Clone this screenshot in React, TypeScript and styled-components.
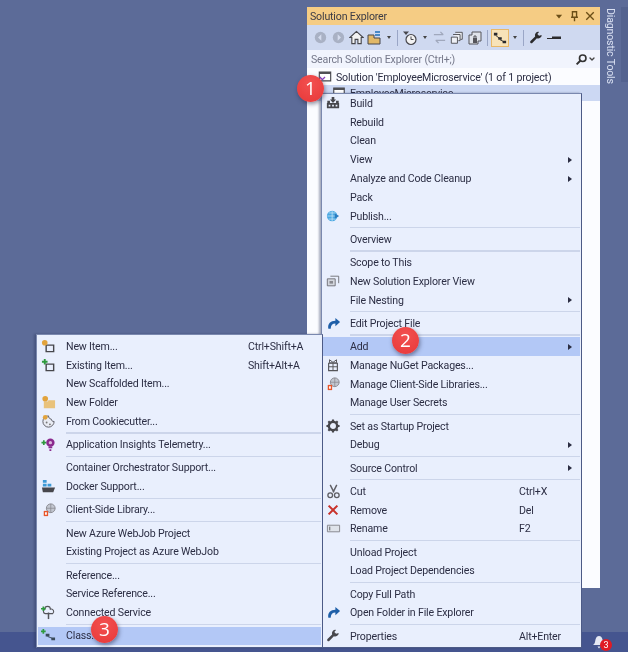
import React from "react";
import styled, { createGlobalStyle } from "styled-components";
import { ChevronDown } from "lucide-react";

const Global = createGlobalStyle`
  html, body { margin: 0; padding: 0; background: #5c6b98; }
  * { box-sizing: border-box; }
`;

const Page = styled.div`
  position: relative;
  width: 628px;
  height: 652px;
  overflow: hidden;
  display: flex;
  flex-direction: column;
  background: #5c6b98;
  font-family: Roboto, "Noto Sans", sans-serif;
  font-size: 10.6px;
  letter-spacing: -0.17px;
  color: #2c2e44;
  filter: blur(0.35px);
`;
const Workspace = styled.div`
  flex: 1;
  display: flex;
  justify-content: flex-end;
  padding: 7px 0 44px 0;
`;
const Panel = styled.section`
  width: 293px;
  display: flex;
  flex-direction: column;
  background: #fcfdff;
`;
const TitleBar = styled.header`
  height: 18px;
  flex: none;
  display: flex;
  align-items: center;
  padding: 0 5px 0 3px;
  background: #f5cc84;
  color: #3b3b45;
`;
const TitleText = styled.span`
  flex: 1;
`;
const TitleIcons = styled.span`
  display: flex;
  align-items: center;
  gap: 5px;
`;
const Toolbar = styled.div`
  height: 25px;
  flex: none;
  display: flex;
  align-items: center;
  padding-left: 4px;
  background: #cfd9f0;
`;
const SearchBox = styled.div`
  height: 18px;
  flex: none;
  display: flex;
  align-items: center;
  justify-content: space-between;
  padding: 0 4px 0 4px;
  background: #f1f4fd;
  color: #75788a;
`;
const SearchIcons = styled.span`
  display: flex;
  align-items: center;
`;
const Tree = styled.div`
  flex: 1;
  padding-top: 1px;
  background: #fbfcff;
`;
const TreeRow = styled.div<{ $selected?: boolean; $indent: number }>`
  height: 16px;
  display: flex;
  align-items: center;
  gap: 4px;
  padding-left: ${(p) => p.$indent}px;
  background: ${(p) => (p.$selected ? "#ccd8f3" : "transparent")};
  white-space: nowrap;
`;
const Rail = styled.aside`
  width: 28px;
  flex: none;
  display: flex;
  padding-left: 4px;
  justify-content: space-between;
`;
const RailLabel = styled.span`
  writing-mode: vertical-rl;
  color: #d9e0f2;
  height: 80px;
  white-space: nowrap;
  padding-top: 1px;
`;
const RailStrip = styled.span`
  width: 7px;
  height: 75px;
  background: #53628f;
`;
const StatusBar = styled.footer`
  height: 20px;
  flex: none;
  display: flex;
  justify-content: flex-end;
  align-items: center;
  padding-right: 21px;
  background: #45558f;
`;
const BellWrap = styled.span`
  position: relative;
  display: block;
  width: 16px;
  height: 16px;
`;
const BellCount = styled.span`
  position: absolute;
  left: 9px;
  top: 5px;
  width: 12px;
  height: 12px;
  border-radius: 50%;
  background: #e01b24;
  color: #fff;
  font-size: 9px;
  line-height: 12px;
  text-align: center;
`;

const Menu = styled.nav<{ $left: number; $top: number; $width: number; $padTop: number }>`
  position: absolute;
  left: ${(p) => p.$left}px;
  top: ${(p) => p.$top}px;
  width: ${(p) => p.$width}px;
  padding: ${(p) => p.$padTop}px 1px 2px;
  background: #e9effd;
  border: 1px solid #7a88ae;
  border-right-color: #4c5a86;
  border-bottom-color: #4c5a86;
  box-shadow: -2px 0 2px rgba(40, 50, 90, 0.4);
`;
const Row = styled.div<{ $active?: boolean; $gutter: number; $keyCol: number }>`
  height: 18.8px;
  display: grid;
  grid-template-columns: ${(p) => p.$gutter}px 1fr ${(p) => p.$keyCol}px 12px;
  align-items: center;
  white-space: nowrap;
  background: ${(p) => (p.$active ? "#b3c8f6" : "transparent")};
`;
const IconCell = styled.span`
  display: flex;
  justify-content: center;
  align-items: center;
  padding-right: 7px;
`;
const Caret = styled.span`
  width: 0;
  height: 0;
  border-left: 4px solid #2b2d42;
  border-top: 3.5px solid transparent;
  border-bottom: 3.5px solid transparent;
`;
const Separator = styled.div<{ $gutter: number }>`
  height: 4.4px;
  margin-left: ${(p) => p.$gutter}px;
  display: flex;
  align-items: center;
  &::after {
    content: "";
    flex: 1;
    height: 1.4px;
    background: #ccd5ea;
  }
`;
const Callout = styled.span<{ $left: number; $top: number }>`
  position: absolute;
  left: ${(p) => p.$left}px;
  top: ${(p) => p.$top}px;
  width: 27px;
  height: 27px;
  border-radius: 50%;
  background: radial-gradient(circle at 50% 30%, #f25050, #e83838);
  color: #fff;
  font-family: "Open Sans", sans-serif;
  font-size: 19px;
  letter-spacing: 0;
  line-height: 27px;
  text-align: center;
  box-shadow: 1px 2px 4px rgba(30, 30, 60, 0.5);
`;

const S = ({ children, w = 16, h = 16 }: { children: React.ReactNode; w?: number; h?: number }) => (
  <svg width={w} height={h} viewBox="0 0 16 16" style={{ flex: "none", display: "block" }}>
    {children}
  </svg>
);

const Dk = "#47474c";
const Icons: Record<string, React.ReactNode> = {
  build: <S w={14} h={14}><path d="M1 8h14v6H1z" fill={Dk} /><path d="M1.500 5.500h3v3h-3zM11.500 5.500h3v3h-3z" fill={Dk} /><path d="M3 10h2v2H3zM7 10h2v2H7zM11 10h2v2h-2z" fill="#e9effd" /><path d="M6.500 1h3v3h2l-3.500 4-3.500-4h2z" fill={Dk} /></S>,
  publish: <S w={14} h={14}><circle cx="7" cy="8" r="6" fill="#4aa8e2" /><path d="M1.500 8h11M7 2v12M3 4.500h8M3 11.500h8" stroke="#cfe8f8" strokeWidth=".8" /><path d="M10 5l5 3-5 3z" fill="#2a7cc0" /></S>,
  newView: <S w={14} h={14}><path d="M1.500 5.500h9v8h-9z" fill="#d3d6dd" stroke="#6a6a70" /><path d="M5 2.500h9.500v8" fill="none" stroke="#6a6a70" /><path d="M4 8h4v3H4z" fill="#8a8a90" /></S>,
  edit: <S w={15} h={15}><path d="M2.500 13.500C1.500 8 5 5 10 5V2l5 4.500L10 11V8C7 8 5 10 5 13.500z" fill="#1e5fa8" /></S>,
  nuget: <S w={14} h={14}><path d="M3 6h10v8.500H3z" fill="none" stroke="#55555a" strokeWidth="1.300" /><path d="M3 10h10M8 6v8.500M4 2l4 3 4-3v3.500H4z" stroke="#55555a" fill="none" strokeWidth="1.100" /></S>,
  libs: <S w={14} h={14}><circle cx="10" cy="6" r="5" fill="#c2c6d0" stroke="#85858c" /><path d="M5 6h10M10 1v10" stroke="#85858c" strokeWidth=".8" /><path d="M2 9h5v6H2z" fill="#e8552a" /><path d="M3.500 10.500h2v3h-2z" fill="#fff" /></S>,
  gear: <S w={14} h={14}><circle cx="8" cy="8" r="4.800" fill="none" stroke={Dk} strokeWidth="2.800" /><path d="M8 .5v3M8 12.500v3M.5 8h3M12.500 8h3M2.700 2.700l2.100 2.100M11.200 11.200l2.100 2.100M13.300 2.700l-2.100 2.100M4.800 11.200l-2.100 2.100" stroke={Dk} strokeWidth="2.400" /></S>,
  cut: <S w={15} h={15}><path d="M4.500 1l4 8M11.500 1l-4 8" stroke="#5d5d63" strokeWidth="1.500" /><circle cx="4.500" cy="12" r="2.500" fill="none" stroke="#5d5d63" strokeWidth="1.400" /><circle cx="11.500" cy="12" r="2.500" fill="none" stroke="#5d5d63" strokeWidth="1.400" /></S>,
  remove: <S w={14} h={14}><path d="M3 3l10 10M13 3L3 13" stroke="#c8322b" strokeWidth="2.400" /></S>,
  rename: <S w={15} h={15}><path d="M1.500 4.500h13v7h-13z" fill="#dfe3ea" stroke="#85858c" /><path d="M4 6v4" stroke="#555" /></S>,
  open: <S w={15} h={15}><path d="M2.500 13.500C1.500 8 5 5 10 5V2l5 4.500L10 11V8C7 8 5 10 5 13.500z" fill="#1e5fa8" /></S>,
  wrench: <S w={14} h={14}><path d="M14.500 4.500a4 4 0 0 1-5.500 3.700L4 13.500a1.500 1.500 0 0 1-2.300-2.100L7 6.300A4 4 0 0 1 11.500 1L9.500 3.500l2 2z" fill={Dk} /></S>,
  newItem: <S w={15} h={15}><path d="M5.500 6.500h8v7h-8z" fill="none" stroke={Dk} strokeWidth="1.500" /><circle cx="4" cy="4" r="3" fill="#e2a33c" /></S>,
  existing: <S w={15} h={15}><path d="M5.500 6.500h8v7h-8z" fill="none" stroke={Dk} strokeWidth="1.500" /><path d="M1 4h6M4 1v6" stroke="#2e9a3e" strokeWidth="2" /></S>,
  folder: <S w={15} h={15}><path d="M3 7h4l1-1.500h7V14H3z" fill="#e9c27b" /><circle cx="4.500" cy="4" r="3" fill="#e2a33c" /></S>,
  cookie: <S w={15} h={15}><path d="M8 2a6 6 0 1 0 6 6c-2 0-3-1-3-2.500C9 5 8 4 8 2z" fill="#e8ebf3" stroke="#5a5a62" /><circle cx="4.500" cy="3.500" r="2.500" fill="#e2a33c" /><circle cx="6" cy="9" r="1" fill="#777" /><circle cx="9.500" cy="11" r="1" fill="#777" /></S>,
  insights: <S w={15} h={15}><circle cx="10" cy="6" r="4.500" fill="#8a2a8e" /><path d="M8 10h4v2H8zM9 13h2v2H9z" fill="#8a2a8e" /><circle cx="10" cy="6" r="1.800" fill="#d9b5dc" /><path d="M.500 6h5M3 3.500v5" stroke="#2e9a3e" strokeWidth="1.800" /></S>,
  docker: <S w={15} h={15}><path d="M2 1h4v3H2zM2 5h4v3H2zM7 5h4v3H7z" fill="#3d9ad6" /><path d="M1 9h14l-2 5H2z" fill={Dk} /></S>,
  connected: <S w={15} h={15}><path d="M4 4.500a3 3 0 0 1 6 0 2.700 2.700 0 0 1 2.500 4.700H4.500A2.500 2.500 0 0 1 4 4.500z" fill="none" stroke="#55555a" strokeWidth="1.200" /><path d="M8 8v7" stroke="#55555a" strokeWidth="1.600" /><path d="M0 4h5M2.500 1.500v5" stroke="#2e9a3e" strokeWidth="1.800" /></S>,
  cls: <S w={15} h={15}><path d="M0 3.500h5M2.500 1v5" stroke="#2e9a3e" strokeWidth="1.800" /><path d="M5 6h4v3H5zM11 10h4v3h-4z" fill="#3a4a5a" /><path d="M7 9l5 2" stroke="#3a4a5a" /></S>,
};

type Item = { label?: string; icon?: string; key?: string; sub?: boolean; active?: boolean; sep?: boolean };

const mainItems: Item[] = [
  { label: "Build", icon: "build" }, { label: "Rebuild" }, { label: "Clean" },
  { label: "View", sub: true }, { label: "Analyze and Code Cleanup", sub: true }, { label: "Pack" },
  { label: "Publish...", icon: "publish" }, { sep: true },
  { label: "Overview" }, { sep: true },
  { label: "Scope to This" }, { label: "New Solution Explorer View", icon: "newView" }, { label: "File Nesting", sub: true }, { sep: true },
  { label: "Edit Project File", icon: "edit" }, { sep: true },
  { label: "Add", sub: true, active: true }, { label: "Manage NuGet Packages...", icon: "nuget" },
  { label: "Manage Client-Side Libraries...", icon: "libs" }, { label: "Manage User Secrets" }, { sep: true },
  { label: "Set as Startup Project", icon: "gear" }, { label: "Debug", sub: true }, { sep: true },
  { label: "Source Control", sub: true }, { sep: true },
  { label: "Cut", icon: "cut", key: "Ctrl+X" }, { label: "Remove", icon: "remove", key: "Del" }, { label: "Rename", icon: "rename", key: "F2" }, { sep: true },
  { label: "Unload Project" }, { label: "Load Project Dependencies" }, { sep: true },
  { label: "Copy Full Path" }, { label: "Open Folder in File Explorer", icon: "open" }, { sep: true },
  { label: "Properties", icon: "wrench", key: "Alt+Enter" },
];

const addItems: Item[] = [
  { label: "New Item...", icon: "newItem", key: "Ctrl+Shift+A" }, { label: "Existing Item...", icon: "existing", key: "Shift+Alt+A" },
  { label: "New Scaffolded Item..." }, { label: "New Folder", icon: "folder" }, { label: "From Cookiecutter...", icon: "cookie" }, { sep: true },
  { label: "Application Insights Telemetry...", icon: "insights" }, { sep: true },
  { label: "Container Orchestrator Support..." }, { label: "Docker Support...", icon: "docker" }, { sep: true },
  { label: "Client-Side Library...", icon: "libs" }, { sep: true },
  { label: "New Azure WebJob Project" }, { label: "Existing Project as Azure WebJob" }, { sep: true },
  { label: "Reference..." }, { label: "Service Reference..." }, { label: "Connected Service", icon: "connected" }, { sep: true },
  { label: "Class...", icon: "cls", active: true },
];

const MenuList = ({ items, gutter, keyCol }: { items: Item[]; gutter: number; keyCol: number }) => (
  <>
    {items.map((it, i) =>
      it.sep ? (
        <Separator key={i} $gutter={gutter} />
      ) : (
        <Row key={i} $active={it.active} $gutter={gutter} $keyCol={keyCol}>
          <IconCell>{it.icon ? Icons[it.icon] : null}</IconCell>
          <span>{it.label}</span>
          <span>{it.key}</span>
          {it.sub ? <Caret /> : <span />}
        </Row>
      )
    )}
  </>
);

const ToolBtn = styled.span<{ $on?: boolean }>`
  width: 18px;
  height: 18px;
  flex: none;
  display: flex;
  align-items: center;
  justify-content: center;
  background: ${(p) => (p.$on ? "#f8e3b8" : "transparent")};
  border: ${(p) => (p.$on ? "1px solid #e8b868" : "none")};
`;
const Tool = ({ children, on }: { children: React.ReactNode; on?: boolean }) => (
  <ToolBtn $on={on}>{children}</ToolBtn>
);
const ToolSep = styled.span`
  width: 1px;
  height: 16px;
  flex: none;
  margin: 0 3px;
  background: #9aa6c6;
`;
const Drop = styled.span`
  width: 0;
  height: 0;
  flex: none;
  margin: 0 3px 0 4px;
  border-top: 3px solid #444;
  border-left: 2.5px solid transparent;
  border-right: 2.5px solid transparent;
`;

export default function App() {
  return (
    <Page>
      <Global />
      <Workspace>
        <Panel>
          <TitleBar>
            <TitleText>Solution Explorer</TitleText>
            <TitleIcons>
              <S w={10} h={10}><path d="M3 6h10l-5 6z" fill="#6b4e16" /></S>
              <S w={11} h={11}><path d="M5 1h6v8H5zM3 9h10M8 9v6" fill="none" stroke="#6b4e16" strokeWidth="2" /></S>
              <S w={10} h={10}><path d="M2 2l12 12M14 2L2 14" stroke="#6b4e16" strokeWidth="2.200" /></S>
            </TitleIcons>
          </TitleBar>
          <Toolbar>
            <Tool><S w={13} h={13}><circle cx="8" cy="8" r="7" fill="#a9b1c4" /><path d="M9 4L5 8l4 4z" fill="#d5dcee" /></S></Tool>
            <Tool><S w={13} h={13}><circle cx="8" cy="8" r="7" fill="#a9b1c4" /><path d="M7 4l4 4-4 4z" fill="#d5dcee" /></S></Tool>
            <Tool><S w={15} h={15}><path d="M8 1.500L1 8h2v6.500h3.500V10h3v4.500H13V8h2z" fill="#f3f3f3" stroke={Dk} strokeWidth="1.200" /></S></Tool>
            <Tool><S><path d="M2 5h6v3h6v6H2z" fill="#e2b866" stroke={Dk} /><path d="M9 2h5M9 5h5" stroke="#1e6fb8" strokeWidth="1.600" /></S></Tool>
            <Drop />
            <ToolSep />
            <Tool><S><circle cx="9" cy="9.500" r="5" fill="#f3f3f3" stroke={Dk} strokeWidth="1.200" /><path d="M9 6.500v3h2.500" stroke={Dk} fill="none" /><path d="M1 1.500h6L4 5z" fill={Dk} /></S></Tool>
            <Drop />
            <Tool><S w={15} h={15}><path d="M2 5h10M9 2l3 3M14 11H4M7 14l-3-3" stroke="#a0a8bc" strokeWidth="1.400" fill="none" /></S></Tool>
            <Tool><S w={14} h={14}><path d="M6 1.500h8v8h-2M3.500 4h8v7h-2M1.500 7h7v7h-7z" fill="#eef0f5" stroke={Dk} /></S></Tool>
            <Tool><S><path d="M2 5h3V2h9v9h-3v3H2z" fill="#dfe3ea" stroke="#55555a" /><path d="M6 8h4v5H6z" fill="#55555a" /><path d="M7 8V6h2v2" fill="none" stroke="#55555a" /></S></Tool>
            <ToolSep />
            <Tool on><S w={14} h={14}><path d="M1 2h4v3H1zM6 7h4v3H6zM11 11h4v3h-4z" fill="#2b2b2d" /><path d="M3 5l4 3M8 10l4 2" stroke="#2b2b2d" /></S></Tool>
            <Drop />
            <ToolSep />
            <Tool><S w={14} h={14}><path d="M14.500 4.500a4 4 0 0 1-5.500 3.700L4 13.500a1.500 1.500 0 0 1-2.300-2.100L7 6.300A4 4 0 0 1 11.500 1L9.500 3.500l2 2z" fill="#2b2b2d" /></S></Tool>
            <Tool><S><path d="M1 8h5V6.500h9V9H1z" fill="#2b2b2d" /></S></Tool>
          </Toolbar>
          <SearchBox>
            <span>Search Solution Explorer (Ctrl+;)</span>
            <SearchIcons>
              <S w={13} h={13}><circle cx="9.500" cy="6.500" r="4" fill="none" stroke="#333" strokeWidth="2" /><path d="M6.500 9.500L2 14" stroke="#333" strokeWidth="2.400" /></S>
              <ChevronDown size={8} color="#444" strokeWidth={4} />
            </SearchIcons>
          </SearchBox>
          <Tree>
            <TreeRow $indent={11}>
              <S w={14} h={14}><path d="M1.500 2.500h13v10h-13z" fill="#fff" stroke={Dk} strokeWidth="1.300" /><path d="M1.500 2.500h13v2h-13z" fill={Dk} /><path d="M2 8l3 3 3-3" stroke="#8a3fc0" fill="none" strokeWidth="1.600" /></S>
              Solution 'EmployeeMicroservice' (1 of 1 project)
            </TreeRow>
            <TreeRow $indent={25} $selected>
              <S w={14} h={14}><path d="M2 2.500h12v10H2z" fill="#fff" stroke={Dk} strokeWidth="1.300" /><path d="M2 2.500h12v2H2z" fill={Dk} /></S>
              EmployeeMicroservice
            </TreeRow>
          </Tree>
        </Panel>
        <Rail>
          <RailLabel>Diagnostic Tools</RailLabel>
          <RailStrip />
        </Rail>
      </Workspace>
      <StatusBar>
        <BellWrap>
          <S><path d="M2 11c2-1 2-3 2.500-5.500C5 3 6.500 2 8 2s3 1 3.500 3.500c.5 2.500.5 4.500 2.500 5.500z" fill="#e6e9f4" /><path d="M6.500 12.500h3l-1.500 2z" fill="#e6e9f4" /></S>
          <BellCount>3</BellCount>
        </BellWrap>
      </StatusBar>

      <Menu $left={321} $top={93} $width={261} $padTop={0}>
        <MenuList items={mainItems} gutter={27} keyCol={49} />
      </Menu>
      <Menu $left={36} $top={334} $width={287} $padTop={2}>
        <MenuList items={addItems} gutter={28} keyCol={61} />
      </Menu>

      <Callout $left={297} $top={75}>1</Callout>
      <Callout $left={392} $top={327}>2</Callout>
      <Callout $left={91} $top={616}>3</Callout>
    </Page>
  );
}
